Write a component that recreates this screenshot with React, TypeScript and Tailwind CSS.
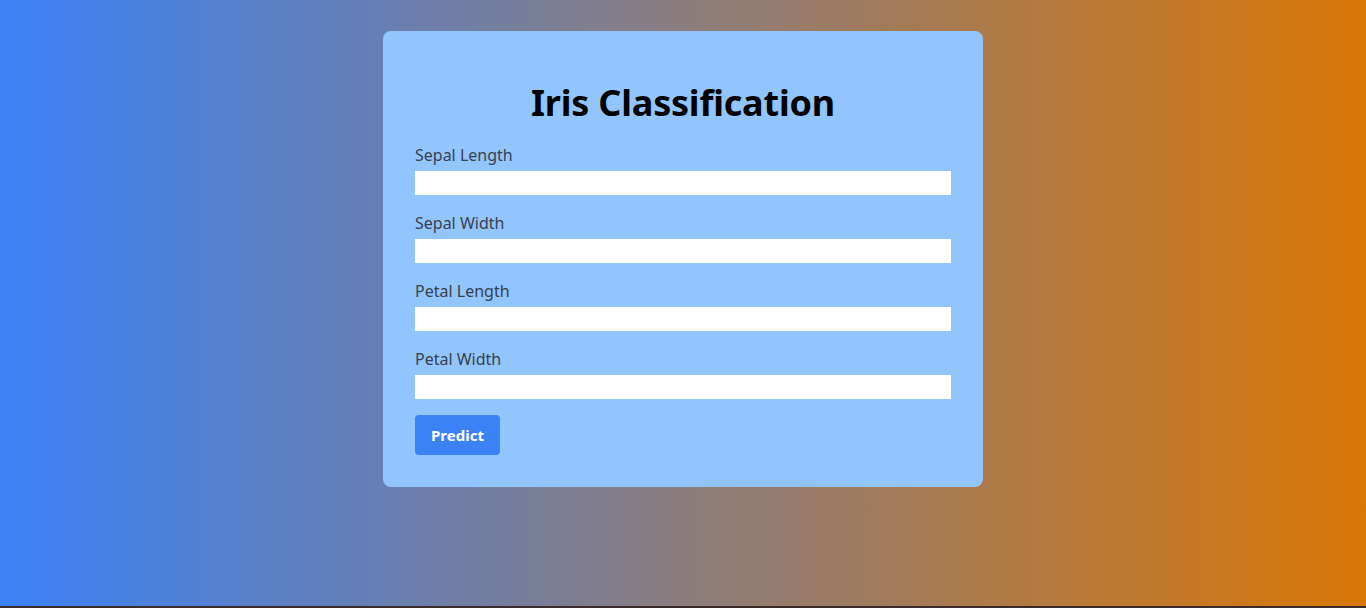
import React from 'react';

const fields = ['Sepal Length', 'Sepal Width', 'Petal Length', 'Petal Width'];

export default function App() {
  return (
    <div className="w-full h-[608px] flex flex-col font-['Noto_Sans',sans-serif]">
      <div className="flex-1 bg-linear-to-r/srgb from-[#3b82f6] to-[#d97706] flex justify-center pt-[31px]">
        <div className="w-[600px] h-fit bg-[#93c5fd] rounded-lg p-8">
          <h1 className="text-4xl font-bold text-black text-center mt-5 mb-5 tracking-[-0.2px]">Iris Classification</h1>
          <form onSubmit={(e) => e.preventDefault()}>
            {fields.map((f) => (
              <div key={f} className="mb-4">
                <label className="block text-base leading-6 text-[#374151] mb-1">{f}</label>
                <input type="text" className="block w-full h-6 bg-white outline-none" />
              </div>
            ))}
            <button
              type="submit"
              className="h-10 w-[85px] rounded bg-[#3b82f6] text-white font-bold text-[15px]"
            >
              Predict
            </button>
          </form>
        </div>
      </div>
      <div className="h-[2px] bg-[#3b2b2b]" />
    </div>
  );
}
